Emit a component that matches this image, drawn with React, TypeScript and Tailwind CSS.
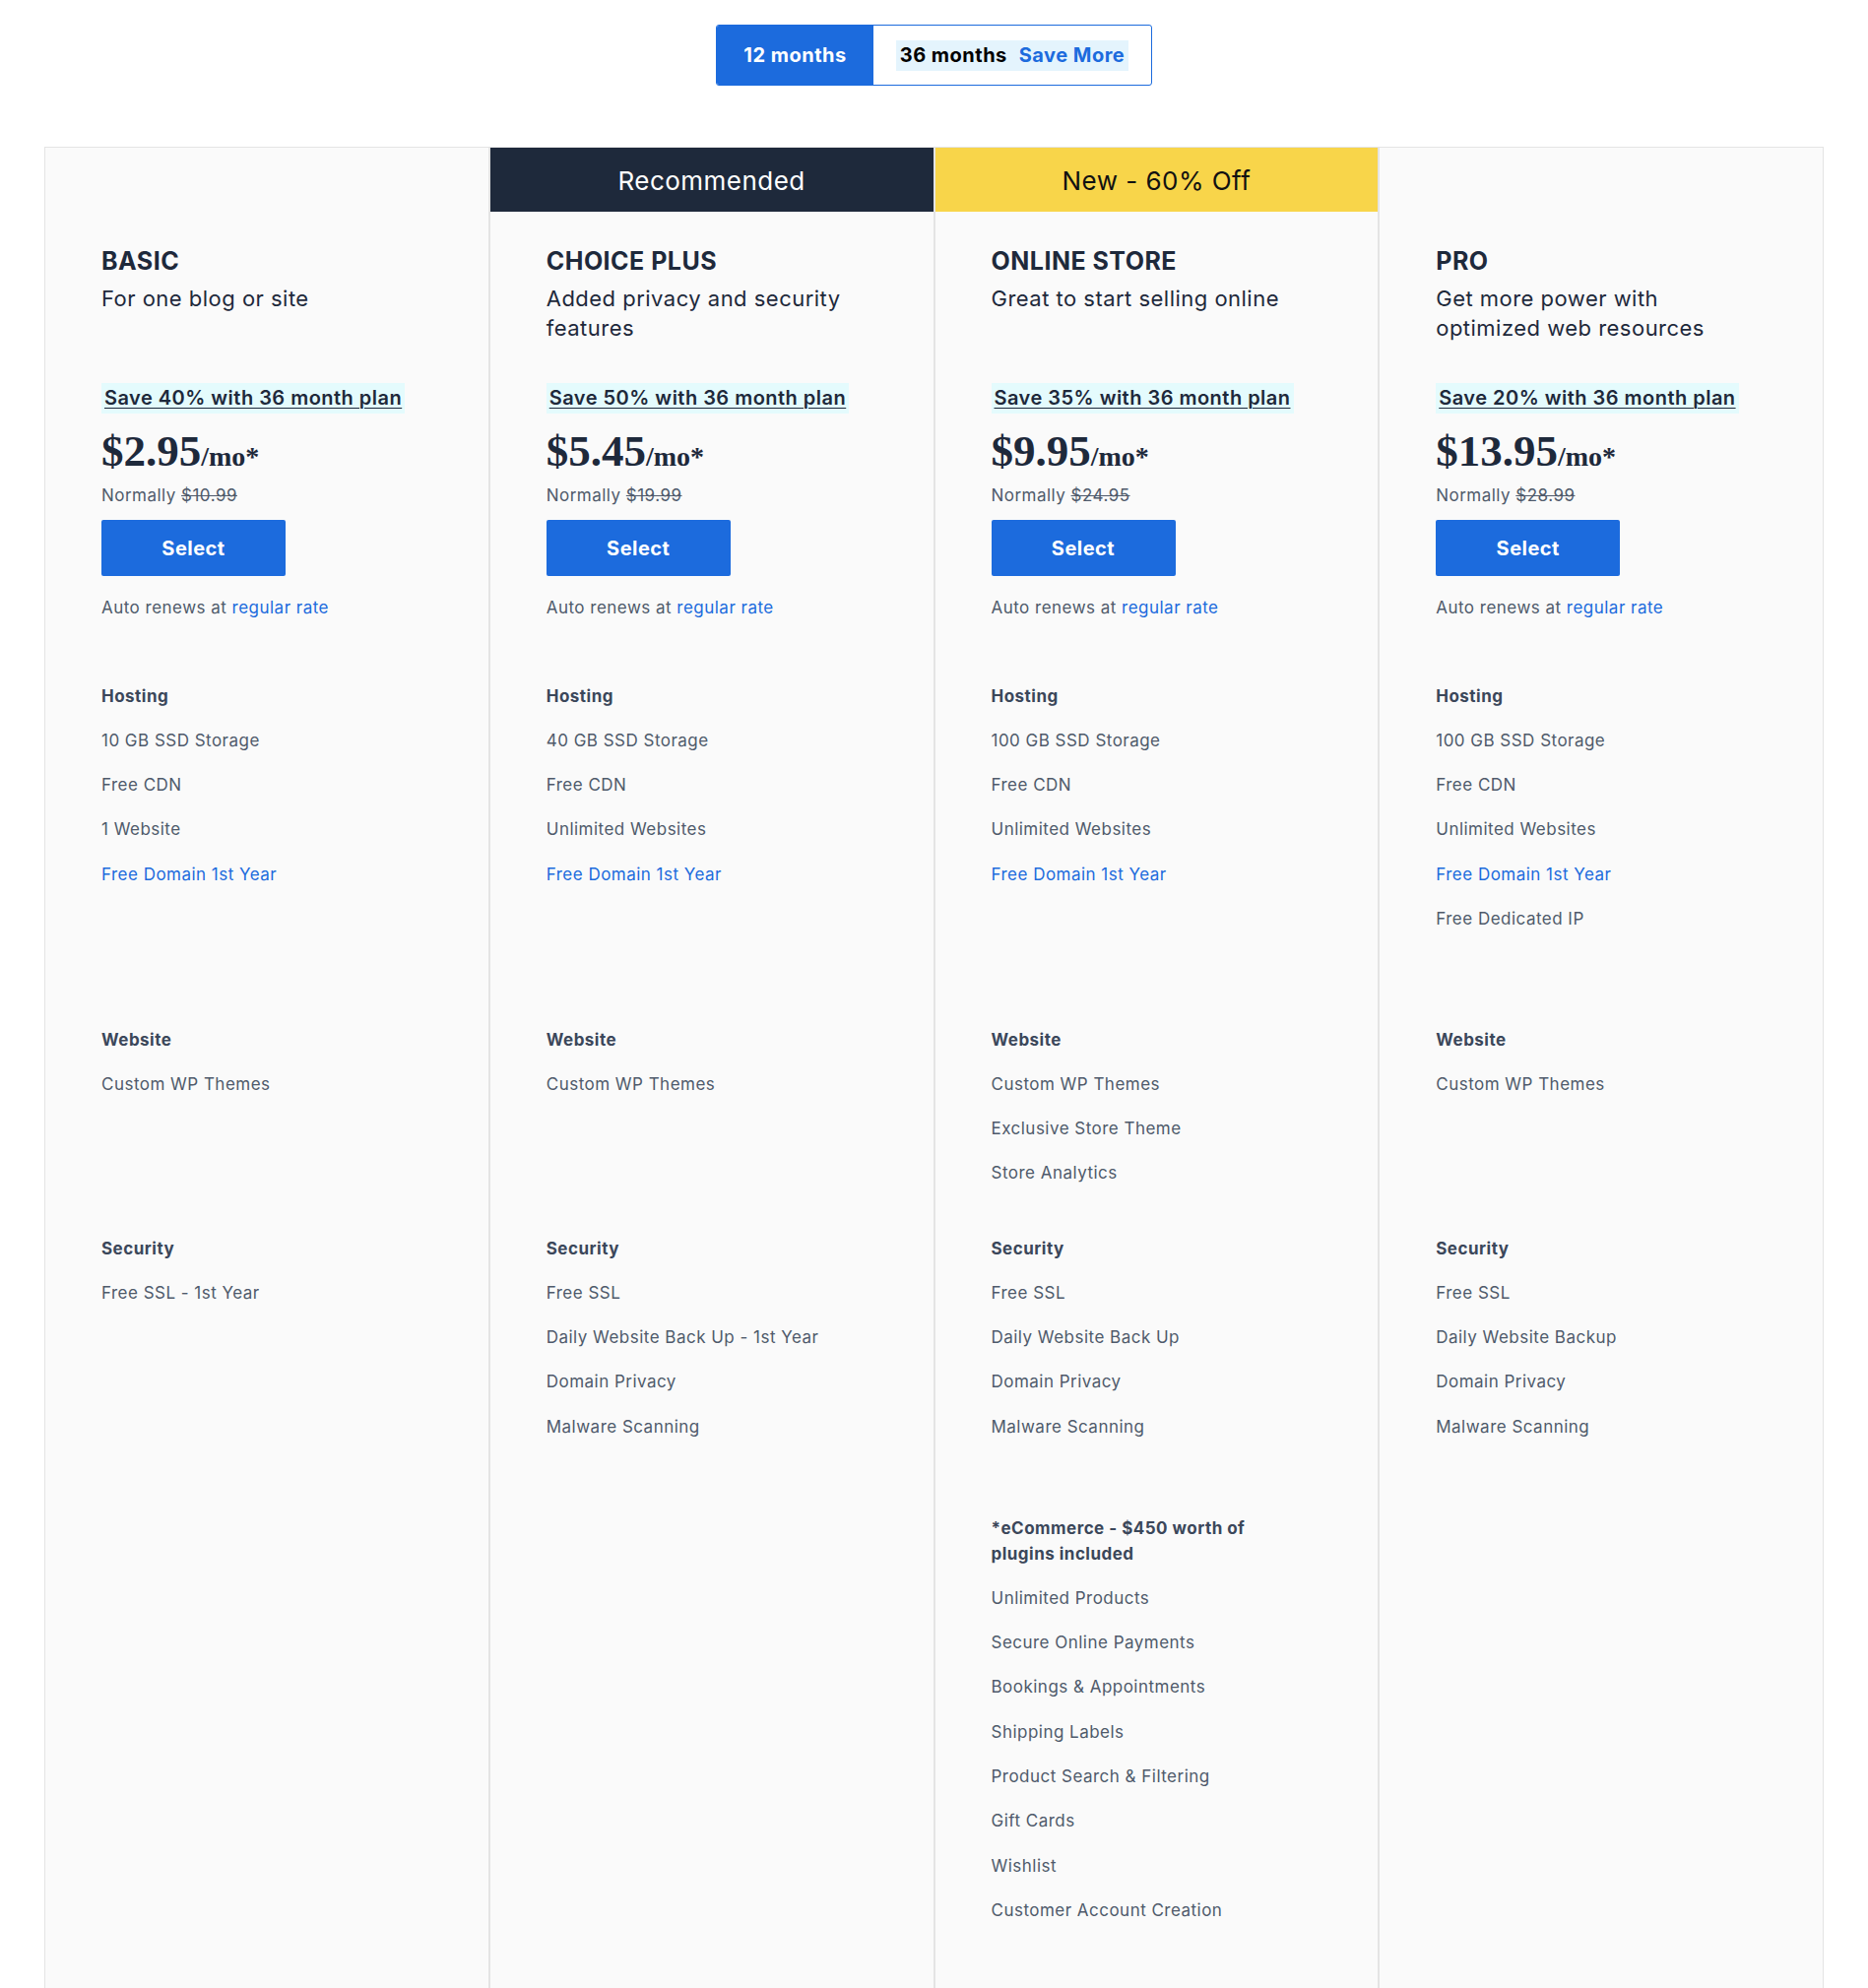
import React from "react";

type Feature = string | { link: string };

type Plan = {
  name: string;
  banner?: { text: string; tone: "dark" | "yellow" };
  desc: string[];
  save: string;
  price: string;
  normal: string;
  hosting: Feature[];
  website: string[];
  security: string[];
  ecommerce?: string[];
};

const plans: Plan[] = [
  {
    name: "BASIC",
    desc: ["For one blog or site"],
    save: "Save 40% with 36 month plan",
    price: "$2.95",
    normal: "$10.99",
    hosting: ["10 GB SSD Storage", "Free CDN", "1 Website", { link: "Free Domain 1st Year" }],
    website: ["Custom WP Themes"],
    security: ["Free SSL - 1st Year"],
  },
  {
    name: "CHOICE PLUS",
    banner: { text: "Recommended", tone: "dark" },
    desc: ["Added privacy and security", "features"],
    save: "Save 50% with 36 month plan",
    price: "$5.45",
    normal: "$19.99",
    hosting: ["40 GB SSD Storage", "Free CDN", "Unlimited Websites", { link: "Free Domain 1st Year" }],
    website: ["Custom WP Themes"],
    security: ["Free SSL", "Daily Website Back Up - 1st Year", "Domain Privacy", "Malware Scanning"],
  },
  {
    name: "ONLINE STORE",
    banner: { text: "New - 60% Off", tone: "yellow" },
    desc: ["Great to start selling online"],
    save: "Save 35% with 36 month plan",
    price: "$9.95",
    normal: "$24.95",
    hosting: ["100 GB SSD Storage", "Free CDN", "Unlimited Websites", { link: "Free Domain 1st Year" }],
    website: ["Custom WP Themes", "Exclusive Store Theme", "Store Analytics"],
    security: ["Free SSL", "Daily Website Back Up", "Domain Privacy", "Malware Scanning"],
    ecommerce: [
      "Unlimited Products",
      "Secure Online Payments",
      "Bookings & Appointments",
      "Shipping Labels",
      "Product Search & Filtering",
      "Gift Cards",
      "Wishlist",
      "Customer Account Creation",
    ],
  },
  {
    name: "PRO",
    desc: ["Get more power with", "optimized web resources"],
    save: "Save 20% with 36 month plan",
    price: "$13.95",
    normal: "$28.99",
    hosting: [
      "100 GB SSD Storage",
      "Free CDN",
      "Unlimited Websites",
      { link: "Free Domain 1st Year" },
      "Free Dedicated IP",
    ],
    website: ["Custom WP Themes"],
    security: ["Free SSL", "Daily Website Backup", "Domain Privacy", "Malware Scanning"],
  },
];

function FeatureList({ title, items, className }: { title: React.ReactNode; items: Feature[]; className: string }) {
  return (
    <div className={className}>
      <div className="text-[17px] leading-[26px] font-bold text-[#3b475a]">{title}</div>
      <ul className="mt-[19.5px] flex flex-col gap-[21.4px]">
        {items.map((f, i) =>
          typeof f === "string" ? (
            <li key={i} className="text-[17px] leading-6 text-[#4f5a6b]">
              {f}
            </li>
          ) : (
            <li key={i} className="text-[17px] leading-6 text-[#1c6bdd]">
              {f.link}
            </li>
          )
        )}
      </ul>
    </div>
  );
}

function PlanColumn({ plan }: { plan: Plan }) {
  return (
    <div className="flex-1 min-w-0 flex flex-col border border-[#e4e4e4] bg-[#fafafa]">
      <div
        className={
          plan.banner
            ? plan.banner.tone === "dark"
              ? "h-[65px] pt-[2px] flex items-center justify-center bg-[#1e293b] text-white text-[26px]"
              : "h-[65px] pt-[2px] flex items-center justify-center bg-[#f8d54a] text-[#111] text-[26px]"
            : "h-[65px]"
        }
      >
        {plan.banner?.text}
      </div>

      <div className="px-[57px] pt-[34px] pb-[72px]">
        <div className="h-[140px]">
          <h2 className="text-[25px] leading-8 font-bold text-[#1e293b]">{plan.name}</h2>
          <p className="mt-[7px] text-[22px] leading-[30px] text-[#1e293b]">
            {plan.desc.map((l, i) => (
              <span key={i} className="block">
                {l}
              </span>
            ))}
          </p>
        </div>

        <div className="inline-block bg-[#e4fbfd] px-[3px] py-[3px] text-[20px] leading-[25px] font-semibold text-[#1e293b] underline underline-offset-[3px] decoration-1">
          {plan.save}
        </div>

        <div className="mt-[16px] flex items-baseline text-[#1e293b] font-bold tracking-normal font-['Liberation_Serif',serif]">
          <span className="text-[45px] leading-[44px]">{plan.price}</span>
          <span className="text-[28px] leading-[28px]">/mo*</span>
        </div>

        <div className="mt-[11px] text-[17px] leading-6 text-[#4f5a6b]">
          Normally <span className="line-through">{plan.normal}</span>
        </div>

        <button className="mt-[13px] w-[187px] h-[57px] rounded-[2px] bg-[#1c6bdd] text-white text-[20px] font-bold">
          Select
        </button>

        <div className="mt-[20px] text-[17px] leading-6 text-[#4f5a6b]">
          Auto renews at <span className="text-[#1c6bdd]">regular rate</span>
        </div>

        <div className="mt-[65px]">
          <FeatureList title="Hosting" items={plan.hosting} className="h-[349px]" />
          <FeatureList title="Website" items={plan.website} className="h-[212px]" />
          <FeatureList title="Security" items={plan.security} className="h-[284px]" />
          {plan.ecommerce && (
            <FeatureList
              title={
                <>
                  *eCommerce - $450 worth of
                  <br />
                  plugins included
                </>
              }
              items={plan.ecommerce}
              className=""
            />
          )}
        </div>
      </div>
    </div>
  );
}

export default function App() {
  return (
    <div className="min-h-screen bg-white font-['Inter','Liberation_Sans',sans-serif] tracking-[0.03em] pb-[1px]">
      <div className="pt-[25px] flex justify-center">
        <div className="flex h-[62px] w-[443px] border border-[#1c6bdd] rounded-[3px] overflow-hidden">
          <div className="w-[159px] flex items-center justify-center bg-[#1c6bdd] text-white text-[20px] font-bold">
            12 months
          </div>
          <div className="flex-1 flex items-center justify-center">
            <div className="flex items-center gap-3 bg-[#e4f4fd] px-[4px] h-[31px] text-[20px] font-bold">
              <span className="text-black">36 months</span>
              <span className="text-[#1c6bdd]">Save More</span>
            </div>
          </div>
        </div>
      </div>

      <div className="mt-[62px] mx-[45px] flex">
        {plans.map((p) => (
          <PlanColumn key={p.name} plan={p} />
        ))}
      </div>
    </div>
  );
}
